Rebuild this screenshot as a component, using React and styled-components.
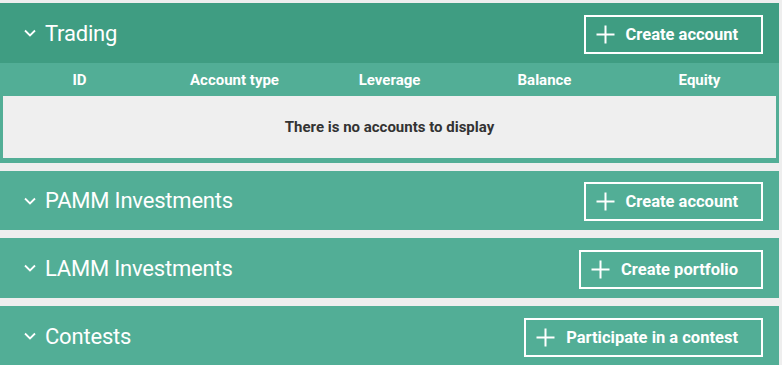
import React from "react";
import styled, { createGlobalStyle } from "styled-components";

const GlobalStyle = createGlobalStyle`
  body {
    margin: 0;
    background: #eeeeee;
    font-family: Roboto, "Liberation Sans", sans-serif;
  }
`;

const Page = styled.div`
  display: flex;
  flex-direction: column;
  gap: 8px;
  padding: 3px 3px 0 0;
`;

const Panel = styled.section`
  background: #52ae96;
  display: flex;
  flex-direction: column;
`;

const Header = styled.div`
  display: flex;
  align-items: center;
  justify-content: space-between;
  height: ${(p) => p.height || 60}px;
  padding: 0 16px 0 23px;
  background: ${(p) => (p.open ? "#3f9d82" : "#52ae96")};
`;

const Title = styled.h2`
  display: flex;
  align-items: center;
  gap: 8px;
  margin: 0;
  color: #fff;
  font-size: 22px;
  font-weight: 400;
  letter-spacing: -0.2px;
`;

const Button = styled.button`
  display: flex;
  align-items: center;
  gap: 11px;
  height: 39px;
  margin-top: 2px;
  padding: 0 23px 0 10px;
  border: 2px solid #fff;
  background: transparent;
  color: #fff;
  font-family: Roboto, "Liberation Sans", sans-serif;
  font-size: 16.5px;
  font-weight: 700;
  cursor: pointer;
`;

const Columns = styled.div`
  display: grid;
  grid-template-columns: repeat(5, 1fr);
  height: 33px;
  padding: 0 2px 0 2px;
  align-items: center;
  color: #fff;
  font-size: 15px;
  font-weight: 700;
  text-align: center;
`;

const Empty = styled.div`
  margin: 0 3px 5px 3px;
  height: 62px;
  background: #efefef;
  display: flex;
  align-items: center;
  justify-content: center;
  color: #333;
  font-size: 15px;
  font-weight: 700;
`;

const Chevron = () => (
  <svg width="14" height="10" viewBox="0 0 14 10">
    <path d="M2 2.5 L7 7.5 L12 2.5" fill="none" stroke="#fff" strokeWidth="1.8" />
  </svg>
);

const Plus = () => (
  <svg width="19" height="19" viewBox="0 0 19 19">
    <path d="M9.5 0.5 V18.5 M0.5 9.5 H18.5" stroke="#fff" strokeWidth="2" />
  </svg>
);

const sections = [
  { name: "PAMM Investments", action: "Create account", height: 59 },
  { name: "LAMM Investments", action: "Create portfolio" },
  { name: "Contests", action: "Participate in a contest" },
];

const columns = ["ID", "Account type", "Leverage", "Balance", "Equity"];

const App = () => {
  return (
    <>
      <GlobalStyle />
      <Page>
        <Panel>
          <Header open>
            <Title>
              <Chevron />
              Trading
            </Title>
            <Button>
              <Plus />
              Create account
            </Button>
          </Header>
          <Columns>
            {columns.map((c) => (
              <div key={c}>{c}</div>
            ))}
          </Columns>
          <Empty>There is no accounts to display</Empty>
        </Panel>
        {sections.map((s) => (
          <Panel key={s.name}>
            <Header height={s.height}>
              <Title>
                <Chevron />
                {s.name}
              </Title>
              <Button>
                <Plus />
                {s.action}
              </Button>
            </Header>
          </Panel>
        ))}
      </Page>
    </>
  );
};

export default App;
